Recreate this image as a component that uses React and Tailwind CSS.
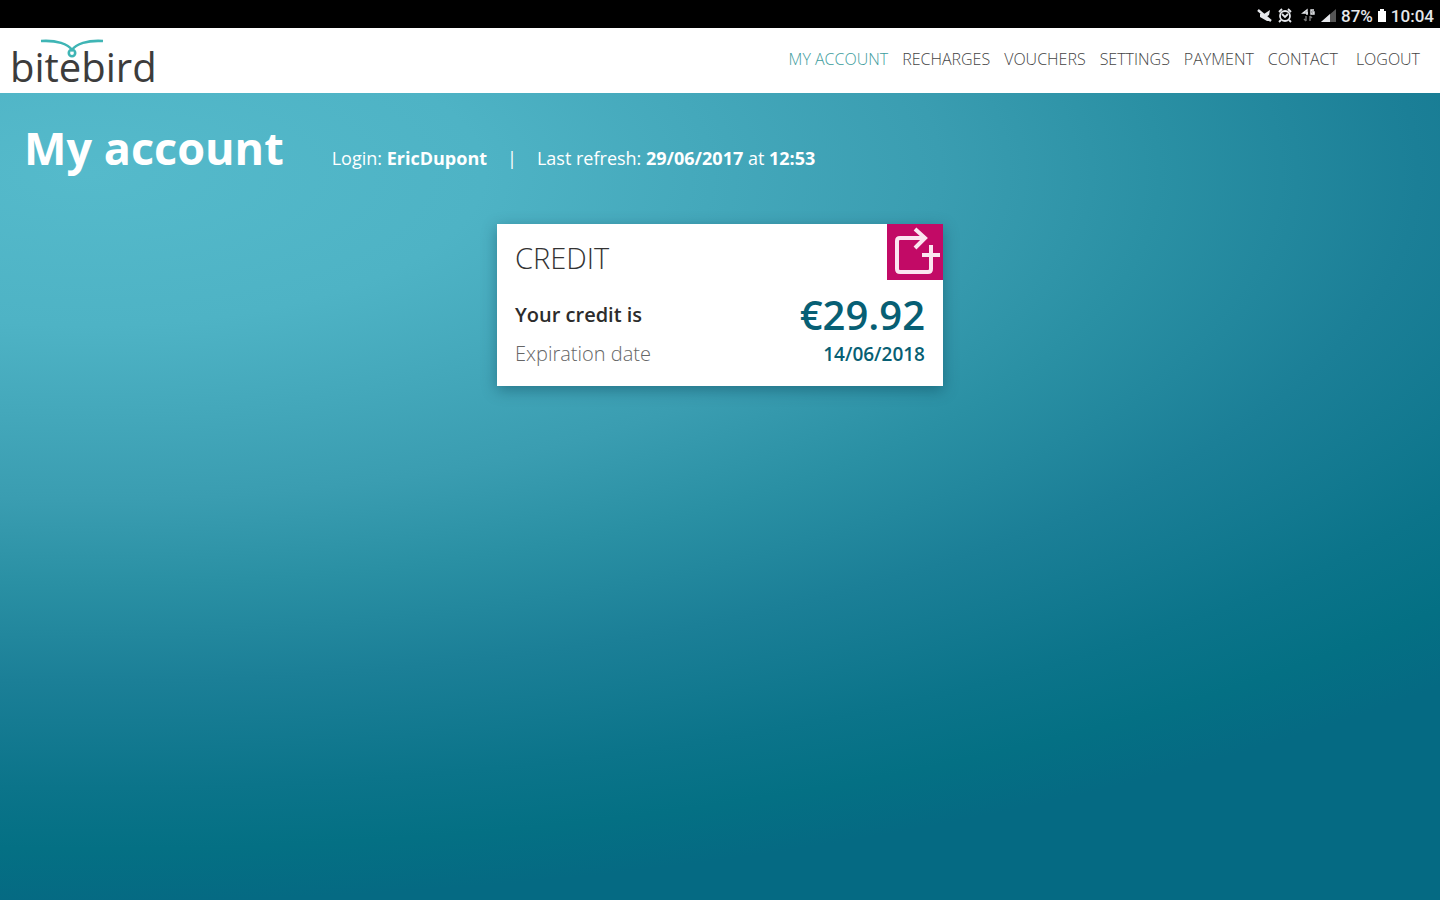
const NAV_ITEMS = ['My account', 'Recharges', 'Vouchers', 'Settings', 'Payment', 'Contact'];

/**
 * Device status bar
 */
const StatusBar = () => (
  <div className="flex h-7 items-center justify-end gap-1 bg-black pl-1 pr-[6px] pt-[3px] font-['Roboto',sans-serif] text-[17px] leading-6 font-medium text-gray-200">
    {/* Muted sound */}
    <svg className="h-4 w-4" viewBox="0 0 16 16" fill="none" stroke="currentColor">
      <path d="M3 6h4l6-4-1 5-3 2 5 4h-4L3 9z" fill="currentColor" stroke="none" />
      <path d="M1 2l13 11" strokeWidth="2.4" />
    </svg>
    {/* Alarm */}
    <svg className="h-4 w-4" viewBox="0 0 16 16" fill="none" stroke="currentColor" strokeWidth="1.8">
      <circle cx="8" cy="8" r="5" />
      <path d="M5 6l3 3 3-3M2 4l3-3M14 4l-3-3M4 12l-2 2M12 12l2 2" />
    </svg>
    {/* 4G data */}
    <svg className="ml-1 h-4 w-4" viewBox="0 0 16 16" fill="none" stroke="currentColor" strokeWidth="1.4">
      <path d="M6 7V2L2 5h5M13 2h-3v4h3V4h-2" />
      <path d="M5 13V8M3 11l2 2M9 8v5M11 10l-2-2" stroke="#777" />
    </svg>
    {/* Signal */}
    <svg className="h-4 w-4" viewBox="0 0 16 16">
      <path d="M0 14L15 1v13z" fill="#555" />
      <path d="M0 14L9 6v8z" fill="currentColor" />
    </svg>
    <span>87%</span>
    <svg className="h-4 w-[10px]" viewBox="0 0 10 16" fill="#fff">
      <path d="M3 1h4v2h2v11H1V3h2z" />
    </svg>
    <span>10:04</span>
  </div>
);

const Logo = () => (
  <a href="#" className="relative block pt-3 text-[40px] leading-[48px] text-[#3c3c3c]">
    bitebird
    <svg className="absolute left-7 top-1 h-6 w-18" viewBox="0 0 72 24" fill="none" stroke="#3fb5b5" strokeWidth="2.6">
      <path d="M3 6C19 5 30 9 34 15C38 9 49 5 65 6" />
      <circle cx="34" cy="18" r="3.2" />
    </svg>
  </a>
);

const Header = () => (
  <header className="flex h-[65px] items-center justify-between bg-white pl-[10px] pr-5">
    <Logo />
    <nav className="flex items-center gap-[14px] pb-1 text-base font-light uppercase text-[#444]">
      {NAV_ITEMS.map((item, index) => (
        <a key={item} href="#" className={index === 0 ? 'text-[#3d9c9c]' : ''}>
          {item}
        </a>
      ))}
      <a href="#" className="ml-1">Logout</a>
    </nav>
  </header>
);

const CreditCard = () => (
  <section className="relative mx-auto mt-[45px] w-[446px] bg-white px-[18px] py-4 shadow-[0_4px_14px_rgba(0,50,70,0.4)]">
    <h2 className="text-[29px] font-light leading-9 text-[#333]">CREDIT</h2>
    <button
      type="button"
      aria-label="Recharge"
      className="absolute right-0 top-0 flex h-14 w-14 items-center justify-center bg-[#c20a66]"
    >
      <svg className="h-14 w-14" viewBox="0 0 56 56" fill="none" stroke="#fbe6f0" strokeWidth="4">
        <path d="M37 14H13Q10 14 10 17V45Q10 48 13 48H41Q44 48 44 45V21" />
        <path d="M28 5L38 14L28 24M35 31H53" />
      </svg>
    </button>
    <div className="mt-4 flex items-center justify-between">
      <span className="text-xl font-semibold leading-6 text-[#2c2c2c]">Your credit is</span>
      <span className="text-[40px] font-semibold leading-[46px] text-[#075f74]">€29.92</span>
    </div>
    <div className="flex items-center justify-between">
      <span className="text-xl font-light leading-8 text-[#666]">Expiration date</span>
      <span className="text-[19px] font-semibold leading-8 text-[#075f74]">14/06/2018</span>
    </div>
  </section>
);

export default function App() {
  return (
    <div className="flex min-h-screen flex-col font-['Open_Sans',sans-serif]">
      <StatusBar />
      <Header />
      <main className="flex-1 bg-[radial-gradient(138%_94%_at_6%_10%,#55bacb_0%,#4eb3c5_20%,#3a9db1_43%,#2a90a4_54%,#1b7f97_67%,#0b748a_81%,#047084_89%,#056a83_96%)]">
        <div className="flex items-baseline px-6 pt-6 text-white">
          <h1 className="text-[45px] font-bold leading-[62px]">My account</h1>
          <p className="ml-12 text-lg">
            Login: <b className="font-bold">EricDupont</b>
            <span className="mx-5">|</span>
            Last refresh: <b className="font-bold">29/06/2017</b> at <b className="font-bold">12:53</b>
          </p>
        </div>
        <CreditCard />
      </main>
    </div>
  );
}
